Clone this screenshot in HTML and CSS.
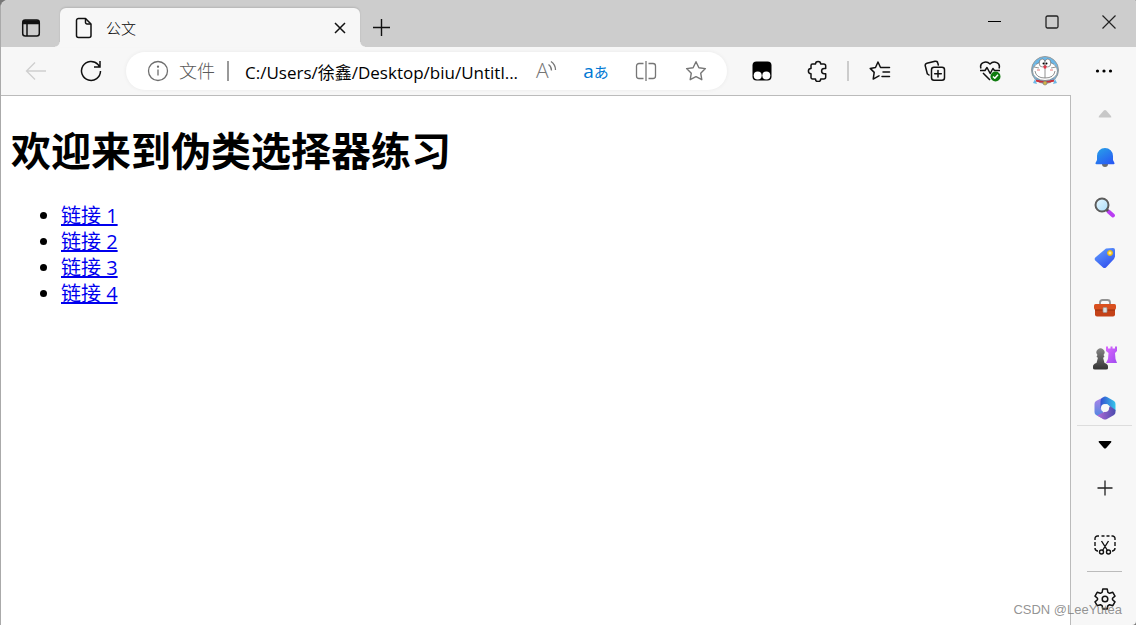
FILE: index.html
```html
<!DOCTYPE html>
<html lang="zh-CN">
<head>
    <meta charset="UTF-8">
    <meta name="viewport" content="width=device-width, initial-scale=1.0">
    <title>公文</title>
    <link rel="stylesheet" href="styles.css">
</head>
<body>
    <div class="window">
        <header class="titlebar">
            <button class="tab-menu" aria-label="标签页操作">
                <svg width="20" height="20" viewBox="0 0 20 20" fill="none" stroke="#111" stroke-width="1.5">
                    <rect x="1.7" y="2" width="16.6" height="16" rx="2.5"/>
                    <path d="M2 3.5h16M2 5h16" stroke-width="2.5"/>
                    <path d="M6 6v12"/>
                </svg>
            </button>
            <div class="tab">
                <svg width="18" height="22" viewBox="0 0 18 22" fill="none" stroke="#111" stroke-width="1.5" stroke-linejoin="round">
                    <path d="M3.5 1.5h7l5.5 5.5v11.5a2 2 0 0 1-2 2H3.5a2 2 0 0 1-2-2v-15a2 2 0 0 1 2-2z"/>
                    <path d="M10.5 1.5v4A1.5 1.5 0 0 0 12 7h4"/>
                </svg>
                <span class="tab-title">公文</span>
                <button class="tab-close" aria-label="关闭标签页">
                    <svg width="12" height="12" viewBox="0 0 12 12" stroke="#111" stroke-width="1.5"><path d="M1 1l10 10M11 1L1 11"/></svg>
                </button>
            </div>
            <button class="new-tab" aria-label="新建标签页">
                <svg width="18" height="18" viewBox="0 0 18 18" stroke="#111" stroke-width="1.4"><path d="M8.5 0v17M0 8.5h17"/></svg>
            </button>
            <div class="window-controls">
                <button aria-label="最小化"><svg width="14" height="14" viewBox="0 0 14 14" stroke="#000"><path d="M0 6.5h13"/></svg></button>
                <button aria-label="最大化"><svg width="14" height="14" viewBox="0 0 14 14" fill="none" stroke="#222" stroke-width="1.3"><rect x="1" y="1" width="12" height="12" rx="1.5"/></svg></button>
                <button aria-label="关闭"><svg width="14" height="14" viewBox="0 0 14 14" stroke="#222" stroke-width="1.2"><path d="M.5.5l13 13M13.5.5l-13 13"/></svg></button>
            </div>
        </header>

        <nav class="toolbar">
            <button class="tool" aria-label="返回">
                <svg width="22" height="20" viewBox="0 0 22 20" fill="none" stroke="#cfcfcf" stroke-width="1.3"><path d="M21 10H2M10 1.5L1.5 10l8.5 8.500"/></svg>
            </button>
            <button class="tool" aria-label="刷新">
                <svg width="22" height="22" viewBox="0 0 22 22" fill="none" stroke="#111" stroke-width="1.5"><path d="M20.5 11a9.500 9.500 0 1 1-2.500-6.500l1.500 2M20 1v6h-6"/></svg>
            </button>
            <div class="address">
                <button class="info" aria-label="网站信息">
                    <svg width="22" height="22" viewBox="0 0 22 22" fill="none" stroke="#6e6e6e" stroke-width="1.3"><circle cx="11" cy="11" r="9.5"/><path d="M11 9.5v6"/><circle cx="11" cy="6.7" r=".5" fill="#6e6e6e"/></svg>
                </button>
                <label class="scheme" for="url">文件</label>
                <span class="address-line"></span>
                <input class="url" id="url" type="text" value="C:/Users/徐鑫/Desktop/biu/Untitl...">
                <button class="address-tool" aria-label="大声朗读">
                    <svg width="22" height="22" viewBox="0 0 22 22" fill="none" stroke="#767676" stroke-width="1.3">
                        <text class="read-letter" x="1" y="18">A</text>
                        <path d="M13.500 4.500q3 2 3 6M16 1.500q4.500 3 4.500 8.500"/>
                    </svg>
                </button>
                <button class="address-tool translate" aria-label="翻译">a<span class="kana">あ</span></button>
                <button class="address-tool" aria-label="分屏">
                    <svg width="22" height="22" viewBox="0 0 22 22" fill="none" stroke="#767676" stroke-width="1.3"><path d="M8.500 3.500H4A2.500 2.500 0 0 0 1.500 6v10A2.500 2.500 0 0 0 4 18.500h4.500M13.500 3.500H18A2.500 2.500 0 0 1 20.500 6v10a2.500 2.500 0 0 1-2.500 2.500h-4.500M11 1v20"/></svg>
                </button>
                <button class="address-tool" aria-label="收藏此页">
                    <svg width="22" height="22" viewBox="0 0 22 22" fill="none" stroke="#767676" stroke-width="1.4" stroke-linejoin="round"><path d="M11 1.700l2.900 6 6.500.9-4.700 4.600 1.100 6.500-5.800-3.100-5.800 3.100 1.100-6.500L1.600 8.600l6.500-.9z"/></svg>
                </button>
            </div>
            <div class="extensions">
                <button class="tool" aria-label="篡改猴">
                    <svg width="22" height="22" viewBox="0 0 22 22"><rect x="1.500" y="1.500" width="19" height="19" rx="4"/><circle cx="6.700" cy="15.500" r="4" fill="#fff"/><circle cx="15.300" cy="15.500" r="4" fill="#fff"/></svg>
                </button>
                <button class="tool" aria-label="扩展">
                    <svg width="22" height="22" viewBox="0 0 22 22" fill="none" stroke="#111" stroke-width="1.5" stroke-linejoin="round"><path d="M6.500 4h3a2.600 2.600 0 0 1 5.200 0h3a2 2 0 0 1 2 2v2.500h-1.500a2.600 2.600 0 0 0 0 5.200h1.500V17a2 2 0 0 1-2 2h-3a2.600 2.600 0 0 1-5.200 0h-3A1.500 1.500 0 0 1 5 17.500v-3.800a2.600 2.600 0 0 1 0-5.200v-3A1.500 1.500 0 0 1 6.500 4z"/></svg>
                </button>
                <span class="tool-line"></span>
                <button class="tool" aria-label="收藏夹">
                    <svg width="22" height="22" viewBox="0 0 22 22" fill="none" stroke="#111" stroke-width="1.5" stroke-linejoin="round" stroke-linecap="round"><path d="M20.500 7.500h-9L9 2 6.500 7.500l-5.300.9 4 4-1 6.700L9 16.400l1-.5M14 12h6.500M13 16.500h7.500"/></svg>
                </button>
                <button class="tool" aria-label="集锦">
                    <svg width="22" height="22" viewBox="0 0 22 22" fill="none" stroke="#111" stroke-width="1.5" stroke-linecap="round"><path d="M5 15l-1.700-1.200L1.300 6a2.300 2.300 0 0 1 1.600-2.800L11 1.200A2.300 2.300 0 0 1 13.800 3l.5 2"/><rect x="7.500" y="7.300" width="13" height="13" rx="2.500"/><path d="M14 10.500v6.600M10.700 13.800h6.600"/></svg>
                </button>
                <button class="tool" aria-label="浏览器健康">
                    <svg width="22" height="22" viewBox="0 0 22 22" fill="none" stroke="#111" stroke-width="1.5" stroke-linejoin="round">
                        <path d="M2 8.500C0 3 7 0 11 4c4-4 11-1 9 4.500M1 10.500h5l2-3 3.200 6 2.700-5 1.600 2H21M4 13l7 7"/>
                        <circle cx="16.500" cy="16.500" r="5" fill="#107c10" stroke="none"/><path d="M14 16.500l1.800 1.800 3.200-3.500" stroke="#fff"/>
                    </svg>
                </button>
                <button class="tool" aria-label="用户">
                    <svg width="30" height="30" viewBox="0 0 30 30">
                        <circle cx="15" cy="14" r="13.500" fill="#6cb8e8" stroke="#999"/>
                        <path d="M5 23l-2 4 4 1M25 23l2 4-4 1" fill="#6cb8e8"/>
                        <path d="M6 24.500q9 2.500 18 0" fill="none" stroke="#c9303a" stroke-width="2"/>
                        <ellipse cx="15" cy="15" rx="12.500" ry="9.500" fill="#fff" stroke="#666" stroke-width=".6"/>
                        <ellipse cx="12.200" cy="7" rx="3" ry="4" fill="#fff" stroke="#555" stroke-width=".6"/>
                        <ellipse cx="17.800" cy="7" rx="3" ry="4" fill="#fff" stroke="#555" stroke-width=".6"/>
                        <circle cx="13.500" cy="7.500" r="1"/><circle cx="16.500" cy="7.500" r="1"/>
                        <path d="M15 12v10M5 15q1 7 10 7t10-7M4 11l5 1M26 11l-5 1" fill="none" stroke="#777" stroke-width=".8"/>
                        <path d="M7 14h3M20 14h3" stroke="#f0a6a6" stroke-width="1.500"/>
                        <circle cx="15" cy="11" r="1.700" fill="#e03546"/>
                        <circle cx="15" cy="27" r="2" fill="#d5b344" stroke="#777" stroke-width=".6"/>
                    </svg>
                </button>
                <button class="tool more" aria-label="更多">
                    <svg width="18" height="6" viewBox="0 0 18 6"><circle cx="2.500" cy="3" r="1.600"/><circle cx="9" cy="3" r="1.600"/><circle cx="15.500" cy="3" r="1.600"/></svg>
                </button>
            </div>
        </nav>

        <div class="content">
            <main class="page">
                <h1>欢迎来到伪类选择器练习</h1>
                <ul>
                    <li><a href="#">链接 1</a></li>
                    <li><a href="#">链接 2</a></li>
                    <li><a href="#">链接 3</a></li>
                    <li><a href="#">链接 4</a></li>
                </ul>
            </main>

            <aside class="sidebar">
                <button class="scroll" aria-label="向上滚动">
                    <svg width="14" height="9" viewBox="0 0 14 9" fill="#c8c8c8"><path d="M1.500 8.500q-1.500 0-.5-1.500L5.800 1.500q1.200-1.200 2.400 0L13 7q1 1.500-.5 1.500z"/></svg>
                </button>
                <div class="apps">
                    <button aria-label="通知">
                        <svg width="22" height="22" viewBox="0 0 22 22">
                            <defs><linearGradient id="bell" x2="0.7" y2="1"><stop stop-color="#27a5e8"/><stop offset="1" stop-color="#285bf3"/></linearGradient></defs>
                            <path d="M8 17h6q0 3-3 3t-3-3z" fill="#6b6b6b"/>
                            <path d="M11 1a8 8 0 0 1 8 8v4l1.500 3q.3 1.300-1 1.300h-17q-1.300 0-1-1.300L3 13V9a8 8 0 0 1 8-8z" fill="url(#bell)"/>
                        </svg>
                    </button>
                    <button aria-label="搜索">
                        <svg width="22" height="22" viewBox="0 0 22 22">
                            <defs><linearGradient id="lens" x2="1" y2="1"><stop stop-color="#e9f8ff"/><stop offset="1" stop-color="#a9dcf8"/></linearGradient></defs>
                            <path d="M14.500 14.500l4.500 4" stroke="#b93df2" stroke-width="4" stroke-linecap="round"/>
                            <path d="M12 12l2 2" stroke="#555" stroke-width="3"/>
                            <circle cx="8" cy="8" r="6.500" fill="url(#lens)" stroke="#5c5c5c" stroke-width="2"/>
                        </svg>
                    </button>
                    <button aria-label="购物">
                        <svg width="22" height="22" viewBox="0 0 22 22">
                            <defs><linearGradient id="tag" x2="0.6" y2="1"><stop stop-color="#62a2ff"/><stop offset="1" stop-color="#3454ef"/></linearGradient></defs>
                            <path d="M12 1.500l7-.5q2 0 2 2v6.500L20 12l-8 8.500q-1.500 1-3 0L1.300 13.500q-1.300-1.500 0-3z" fill="url(#tag)"/>
                            <circle cx="16" cy="6" r="2.500" fill="#ffd43b" stroke="#e4b51d"/><circle cx="16" cy="6" r="1" fill="#fff3b0"/>
                        </svg>
                    </button>
                    <button aria-label="工具">
                        <svg width="24" height="20" viewBox="0 0 24 20">
                            <path d="M7 7V4.500Q7 2 9.500 2h5Q17 2 17 4.500V7" fill="none" stroke="#929292" stroke-width="1.800"/>
                            <rect x="2" y="8" width="20" height="10.500" rx="2" fill="#c44218"/>
                            <path d="M2.500 6h19Q23 6 23 7.500V10q0 2-2 2H3q-2 0-2-2V7.500Q1 6 2.500 6z" fill="#d9501f"/>
                            <path d="M2 12h20" stroke="#97310f"/>
                            <rect x="10" y="9.500" width="4" height="5" rx="1" fill="#ddd" stroke="#999" stroke-width=".7"/>
                        </svg>
                    </button>
                    <button aria-label="游戏">
                        <svg width="24" height="24" viewBox="0 0 24 24">
                            <defs>
                                <linearGradient id="pawn" x2="0" y2="1"><stop stop-color="#858585"/><stop offset="1" stop-color="#343434"/></linearGradient>
                                <linearGradient id="rook" x2="1" y2="1"><stop stop-color="#dc68ff"/><stop offset="1" stop-color="#a04bef"/></linearGradient>
                            </defs>
                            <path d="M13 .5h2v2h2.500v-2h2v2H22v-2h2V5l-2 2 .5 6 1.500 4H13l2-4 .5-6L13 5z" fill="url(#rook)"/>
                            <path d="M4.500 9a4 4 0 1 1 6 0q1.500 1 .5 2.500h-1l1.500 5.500q3.500 1 3.500 3.500v1.700q0 1.300-2 1.300H2q-2 0-2-1.300v-1.700Q0 18 3.500 17L5 11.500H4Q3 10 4.500 9z" fill="url(#pawn)"/>
                        </svg>
                    </button>
                    <button aria-label="Microsoft 365">
                        <svg width="22" height="24" viewBox="0 0 22 24">
                            <defs>
                                <linearGradient id="officeTop" x2="1" y2="0"><stop stop-color="#334ed0"/><stop offset="1" stop-color="#36c5ea"/></linearGradient>
                                <linearGradient id="officeLeft" x2="0" y2="1"><stop stop-color="#b184e8"/><stop offset="1" stop-color="#4587e0"/></linearGradient>
                                <linearGradient id="officeRight" x2="1" y2="0"><stop stop-color="#b36bd6"/><stop offset="1" stop-color="#4b4bae"/></linearGradient>
                            </defs>
                            <path d="M9 1.500L2 5Q.5 6 .5 8v8q0 2 1.500 3l7 3.500V8z" fill="url(#officeLeft)"/>
                            <path d="M6.500 12V5q0-2 1.500-3l2-1.200q1.500-.6 3 .2L20 5q1.500 1 1.500 3v7L13 8z" fill="url(#officeTop)"/>
                            <path d="M21.500 10v6q0 2-1.500 3l-7 4q-2 1-4 0l-6-3.500L14 14l2-4 5.500 4z" fill="url(#officeRight)"/>
                            <circle cx="11" cy="12" r="4" fill="#f7f7f7"/>
                        </svg>
                    </button>
                </div>
                <hr class="wide-line">
                <button class="scroll" aria-label="向下滚动">
                    <svg width="14" height="9" viewBox="0 0 14 9"><path d="M1.500 1Q0 1 1 2.500L5.800 8q1.200 1.200 2.400 0L13 2.500Q14 1 12.500 1z"/></svg>
                </button>
                <button class="add" aria-label="添加">
                    <svg width="16" height="16" viewBox="0 0 16 16" stroke="#222" stroke-width="1.3"><path d="M8 .5v15M.5 8h15"/></svg>
                </button>
                <div class="sidebar-bottom">
                    <button aria-label="屏幕截图">
                        <svg width="22" height="20" viewBox="0 0 22 20" fill="none" stroke="#111" stroke-width="1.4">
                            <path d="M1 5V3.500A2.500 2.500 0 0 1 3.500 1H5M7.500 1h3M12.500 1h3M17.500 1h1A2.500 2.500 0 0 1 21 3.500V5M21 7v4M1 7v4M1 13q0 2.500 2.500 3H4M21 13q0 2.500-2.500 3H18M7.500 6l6 9.500M14.500 6l-6 9.500"/>
                            <circle cx="7.500" cy="17" r="2"/><circle cx="14.500" cy="17" r="2"/>
                        </svg>
                    </button>
                    <hr class="short-line">
                    <button aria-label="设置">
                        <svg width="22" height="22" viewBox="0 0 22 22" fill="none" stroke="#111" stroke-width="1.5" stroke-linejoin="round">
                            <path d="M8.800 1h4.400l.7 3.300 1.700 1 3.200-1L21 8.100l-2.500 2.200v1.400l2.500 2.200-2.200 3.800-3.200-1-1.700 1-.7 3.300H8.800l-.7-3.300-1.700-1-3.200 1L1 13.900l2.500-2.200v-1.400L1 8.100l2.200-3.800 3.200 1 1.700-1z"/>
                            <circle cx="11" cy="11" r="2.800"/>
                        </svg>
                    </button>
                </div>
            </aside>
        </div>
        <span class="watermark">CSDN @LeeYutea</span>
    </div>
</body>
</html>
```
FILE: styles.css
```css
* {
    box-sizing: border-box;
}

body {
    margin: 0;
    background: #777;
    font-family: "Open Sans", "Noto Sans CJK SC", sans-serif;
    color: #000;
}

button {
    display: flex;
    align-items: center;
    justify-content: center;
    padding: 0;
    border: none;
    background: none;
    font-family: inherit;
}

svg {
    flex-shrink: 0;
}

.window {
    position: relative;
    display: flex;
    flex-direction: column;
    min-height: 100vh;
    border-left: 1px solid #aaa;
    border-radius: 8px 2px 4px 0;
    background: #f7f7f7;
    overflow: hidden;
}

/* title bar */
.titlebar {
    display: flex;
    height: 47px;
    padding-top: 8px;
    background: #cdcdcd;
}

.tab-menu {
    width: 59px;
}

.tab {
    position: relative;
    display: flex;
    align-items: center;
    width: 300px;
    padding: 0 12px 0 15px;
    border-radius: 6px 6px 0 0;
    background: #f7f7f7;
    box-shadow: 0 -1px 2px rgba(0, 0, 0, 0.12);
}

/* curved feet of the active tab */
.tab::before,
.tab::after {
    content: "";
    position: absolute;
    bottom: 0;
    width: 5px;
    height: 5px;
}

.tab::before {
    right: 100%;
    background: radial-gradient(circle at 0 0, #cdcdcd 4px, #f7f7f7 5px);
}

.tab::after {
    left: 100%;
    background: radial-gradient(circle at 100% 0, #cdcdcd 4px, #f7f7f7 5px);
}

.tab-title {
    flex: 1;
    margin-left: 13px;
    font-size: 15px;
    font-weight: 300;
}

.tab-close {
    width: 16px;
    height: 24px;
}

.new-tab {
    width: 44px;
}

.window-controls {
    display: flex;
    height: 28px;
    margin-left: auto;
}

.window-controls button {
    width: 57px;
    padding-left: 3px;
}

/* toolbar */
.toolbar {
    display: flex;
    align-items: center;
    height: 48px;
    padding-left: 7px;
}

.tool {
    width: 55px;
    height: 40px;
}

.address {
    display: flex;
    flex: 1;
    align-items: center;
    min-width: 0;
    height: 38px;
    margin: 0 7px 0 8px;
    padding: 0 6px 0 21px;
    border-radius: 19px;
    background: #fff;
    box-shadow: 0 0 4px rgba(0, 0, 0, 0.06);
}

.scheme {
    margin-left: 10px;
    font-size: 18px;
    font-weight: 300;
    line-height: 22px;
    color: #5a5a5a;
}

.address-line {
    width: 2px;
    height: 20px;
    margin: 0 16px 0 12px;
    background: #999;
}

.url {
    flex: 1;
    min-width: 0;
    height: 26px;
    padding: 0;
    border: none;
    outline: none;
    background: none;
    font-family: inherit;
    font-size: 17px;
    text-overflow: ellipsis;
}

.address-tool {
    width: 50px;
    height: 36px;
}

.read-letter {
    fill: #767676;
    stroke: none;
    font-size: 21px;
    font-weight: 300;
}

.translate {
    font-size: 19px;
    color: #0078d4;
}

.kana {
    font-size: 15px;
}

.extensions {
    display: flex;
    align-items: center;
}

.tool-line {
    width: 2px;
    height: 20px;
    margin: 0 3px;
    background: #ccc;
}

.more {
    width: 64px;
}

/* web page and sidebar */
.content {
    display: flex;
    flex: 1;
}

.page {
    flex: 1;
    padding: 0 10px;
    border-top: 1px solid #bbb;
    border-right: 1px solid #bbb;
    background: #fff;
    font-size: 20px;
    line-height: 26px;
}

h1 {
    margin: 27px 0 24px;
    font-size: 40px;
    line-height: 56px;
}

ul {
    margin: 0;
    padding-left: 50px;
}

a {
    color: #0000ee;
}

.sidebar {
    display: flex;
    flex-direction: column;
    width: 65px;
    padding-left: 2px;
}

.sidebar button {
    width: 100%;
}

.scroll {
    height: 36px;
}

.apps {
    height: 294px;
    padding-top: 2px;
    overflow: hidden;
}

.apps button {
    height: 50px;
}

hr {
    height: 1px;
    margin: 0 auto;
    border: none;
}

.wide-line {
    width: 55px;
    background: #ddd;
}

.short-line {
    width: 35px;
    background: #bbb;
}

.add {
    height: 52px;
}

.sidebar-bottom {
    margin-top: auto;
}

.sidebar-bottom button {
    height: 53px;
}

.watermark {
    position: absolute;
    right: 14px;
    bottom: 6px;
    font-family: "Liberation Sans", sans-serif;
    font-size: 13px;
    line-height: 18px;
    color: rgba(120, 120, 120, 0.8);
}
```
